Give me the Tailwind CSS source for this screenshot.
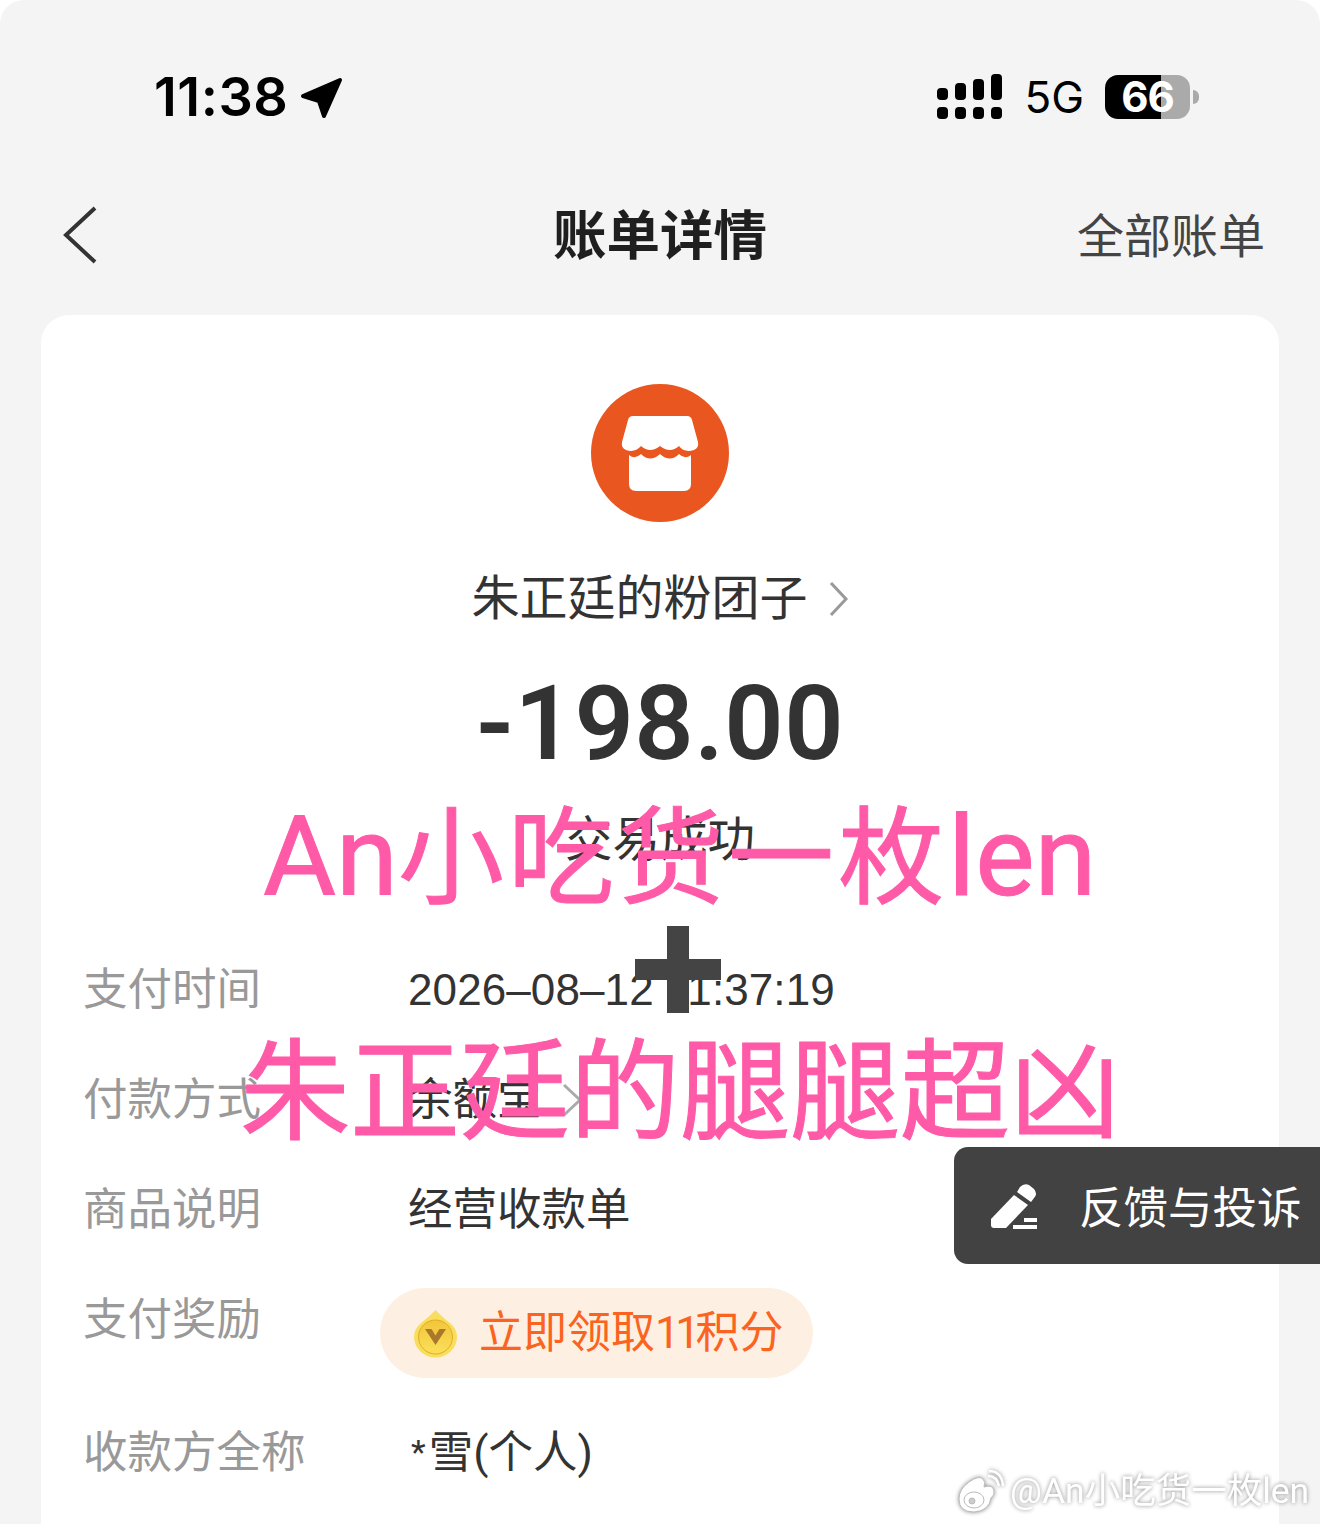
<!DOCTYPE html>
<html lang="zh-CN">
<head>
  <meta charset="UTF-8" />
  <title>账单详情</title>
  <script src="https://cdn.jsdelivr.net/npm/@tailwindcss/browser@4"></script>
</head>
<body class="bg-white">
  <div class="relative w-[1320px] h-[1524px] overflow-hidden rounded-t-[24px] bg-[#f4f4f4] font-['Roboto','Noto_Sans_CJK_SC',sans-serif] text-[#333]">

    <!-- Status bar -->
    <div class="h-[190px] flex items-center justify-between pl-[154px] pr-[121px] pt-[4px] text-black">
      <div class="flex items-center gap-[12px]">
        <span class="font-['Inter'] text-[54px] font-semibold leading-none tracking-[0.5px]">11:38</span>
        <svg width="44" height="44" viewBox="0 0 44 44" class="mt-[1px]"><path d="M3 20 L40 4 L24 40 L19 25 Z" fill="#000" stroke="#000" stroke-width="4" stroke-linejoin="round"/></svg>
      </div>
      <div class="flex items-center">
        <svg width="66" height="46" viewBox="0 0 66 46" fill="#000">
          <rect x="0" y="14" width="11" height="12" rx="4"/><rect x="18" y="9" width="11" height="17" rx="4"/><rect x="36" y="5" width="11" height="21" rx="4"/><rect x="54" y="0" width="11" height="26" rx="4"/>
          <rect x="0" y="33" width="11" height="12" rx="4"/><rect x="18" y="33" width="11" height="12" rx="4"/><rect x="36" y="33" width="11" height="12" rx="4"/><rect x="54" y="33" width="11" height="12" rx="4"/>
        </svg>
        <span class="ml-[21px] font-['Inter'] text-[44px] font-normal leading-none">5G</span>
        <div class="relative ml-[21px] w-[85px] h-[44px] rounded-[13px] bg-[linear-gradient(90deg,#000_0,#000_56px,#aaa_56px,#aaa_100%)] flex items-center justify-center">
          <span class="font-['Inter'] text-[42px] font-bold leading-none text-white tracking-[-1px]">66</span>
        </div>
        <div class="ml-[3px] w-[6px] h-[14px] rounded-r-[6px] bg-[#aaa]"></div>
      </div>
    </div>

    <!-- Nav -->
    <div class="relative h-[90px] flex items-center justify-between pl-[62px] pr-[55px]">
      <svg width="36" height="60" viewBox="0 0 36 60" fill="none"><path d="M33 3 L4 30 L33 57" stroke="#333" stroke-width="4"/></svg>
      <h1 class="absolute left-0 right-0 pt-[3px] text-center text-[53.5px] font-bold leading-none text-[#1f1f1f]">账单详情</h1>
      <span class="pt-[3px] text-[47px] font-normal leading-none text-[#444]">全部账单</span>
    </div>

    <!-- Card -->
    <div class="mx-[41px] mt-[35px] h-[1300px] rounded-t-[28px] bg-white">
      <div class="flex flex-col items-center pt-[69px]">
        <svg width="138" height="138" viewBox="0 0 138 138">
          <circle cx="69" cy="69" r="69" fill="#e9561f"/>
          <path d="M42 32 H96 Q100 32 101 36 L107 58 Q108 64 103 66 Q93 69 88 62 Q79 70 69 62 Q59 70 50 62 Q44 69 35 66 Q30 64 31 58 L37 36 Q38 32 42 32 Z" fill="#fff"/>
          <path d="M38 71 Q44 76 50 70 Q59 79 69 70 Q79 79 88 70 Q94 76 100 71 V100 Q100 107 93 107 H45 Q38 107 38 100 Z" fill="#fff"/>
        </svg>
        <div class="mt-[53px] h-[48px] flex items-center gap-[21px]">
          <span class="text-[48px] font-normal leading-none text-[#333]">朱正廷的粉团子</span>
          <svg width="20" height="36" viewBox="0 0 20 36" fill="none"><path d="M2 2 L17 18 L2 34" stroke="#999" stroke-width="3"/></svg>
        </div>
        <div class="mt-[41px] h-[120px] flex items-center text-[104px] font-semibold leading-none tracking-[0.5px] text-[#333]">-198.00</div>
        <div class="mt-[27px] h-[60px] flex items-center text-[47.5px] font-normal leading-none text-[#333]">交易成功</div>
      </div>

      <div class="mt-[64px] pl-[42px] grid grid-cols-[325px_1fr] text-[44.5px] leading-none">
        <div class="h-[110px] flex items-center font-normal text-[#999]">支付时间</div>
        <div class="h-[110px] flex items-center font-['Liberation_Sans'] text-[44px] tracking-[0.1px]">2026–08–12 11:37:19</div>
        <div class="h-[110px] flex items-center font-normal text-[#999]">付款方式</div>
        <div class="h-[110px] flex items-center gap-[20px] font-normal">余额宝
          <svg width="22" height="34" viewBox="0 0 22 34" fill="none"><path d="M2 2 L18 17 L2 32" stroke="#aaa" stroke-width="3"/></svg>
        </div>
        <div class="h-[110px] flex items-center font-normal text-[#999]">商品说明</div>
        <div class="h-[110px] flex items-center font-normal">经营收款单</div>
        <div class="h-[111px] flex items-center font-normal text-[#999]">支付奖励</div>
        <div class="h-[111px] pt-[23px]">
          <div class="ml-[-28px] w-[433px] h-[90px] rounded-full bg-[#fdf0e2] flex items-center pl-[33px] gap-[21px] text-[44px] text-[#fa6420] font-normal">
            <svg width="45" height="49" viewBox="0 0 45 49">
              <defs><linearGradient id="coin" x1="0" y1="0" x2="0" y2="1"><stop offset="0" stop-color="#f2c53a"/><stop offset="1" stop-color="#fbe05a"/></linearGradient></defs>
              <path d="M22.5 1 Q28 7 37 14 Q44 20 44 28 A21.5 20.5 0 0 1 1 28 Q1 20 8 14 Q17 7 22.5 1 Z" fill="#f9de5e"/>
              <circle cx="22.5" cy="28" r="17" fill="url(#coin)" stroke="#e0ad28" stroke-width="1"/>
              <path d="M12 20 H33 L22.5 36 Z" fill="#a9782a"/>
              <path d="M18.5 20 H26.5 L22.5 26.5 Z" fill="#f2c93f"/>
            </svg>
            <span>立即领取<span class="tracking-[-4.5px]">11</span>积分</span>
          </div>
        </div>
        <div class="h-[155px] flex items-center font-normal text-[#999]">收款方全称</div>
        <div class="h-[155px] flex items-center font-normal"><span class="ml-[3px] mr-[3px] text-[34px] mt-[-4px]">*</span>雪(个人)</div>
      </div>
    </div>

    <!-- Feedback tab -->
    <div class="absolute left-[954px] top-[1147px] w-[366px] h-[117px] rounded-l-[14px] bg-[#424242] flex items-center pl-[36px] gap-[41px] text-white">
      <svg width="48" height="48" viewBox="0 0 48 48" fill="#fff">
        <path d="M30 5 Q34 1 39 3 L44 7 Q48 12 44 16 L41 20 L27 10 Z"/>
        <path d="M24 13 L38 23 L16 46 H4 Q1 46 1 43 V37 Z"/>
        <rect x="34" y="36" width="13" height="4"/><rect x="23" y="43" width="24" height="4"/>
      </svg>
      <span class="pt-[7px] text-[44.5px] font-normal leading-none whitespace-nowrap">反馈与投诉</span>
    </div>

    <!-- Pink caption stickers over the page -->
    <div class="absolute left-[263px] top-[784px] whitespace-nowrap text-[112px] leading-[130px] font-normal text-[#ff5aa8] font-['Roboto',sans-serif] [-webkit-text-stroke:1px_#ff5aa8]">An<span class="font-['Noto_Sans_CJK_SC'] text-[106px] tracking-[4px]">小吃货一枚</span>len</div>
    <svg class="absolute left-[634px] top-[926px]" width="88" height="88" viewBox="0 0 88 88" fill="#444"><rect x="33" y="0" width="22" height="87"/><rect x="1" y="33" width="86" height="21"/></svg>
    <div class="absolute left-[240px] top-[1018px] whitespace-nowrap text-[110px] leading-[130px] font-normal text-[#ff5aa8] font-['Noto_Sans_CJK_SC',sans-serif] [-webkit-text-stroke:1px_#ff5aa8]">朱正廷的腿腿超凶</div>

    <!-- Weibo watermark -->
    <div class="absolute left-[957px] top-[1470px] flex items-center gap-[6px] text-white [filter:drop-shadow(0_0_2px_rgba(0,0,0,0.45))]">
      <svg width="47" height="44" viewBox="0 0 47 44" fill="#fff" stroke="#bbb" stroke-width="1">
        <path d="M2 29 Q2 19 12 12 Q22 5 26 9 Q29 12 27 17 Q36 14 37 21 Q38 25 34 28 Q32 41 17 42 Q2 42 2 29 Z"/>
        <ellipse cx="17" cy="30" rx="10" ry="8" fill="none"/><circle cx="15" cy="31" r="3" fill="#ccc"/>
        <path d="M31 6 Q40 6 42 16 M32 1 Q45 1 46 16" fill="none" stroke-width="2.5" stroke="#fff"/>
      </svg>
      <span class="text-[35.5px] leading-none whitespace-nowrap font-normal">@An小吃货一枚len</span>
    </div>
  </div>
</body>
</html>
